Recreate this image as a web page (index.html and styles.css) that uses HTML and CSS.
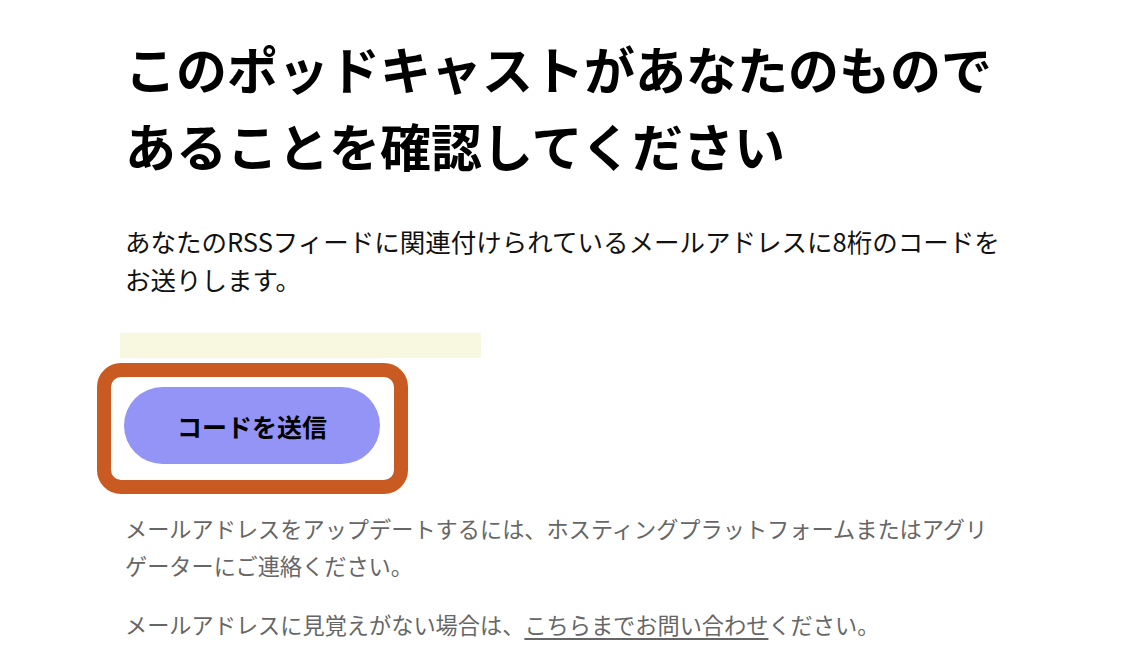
FILE: index.html
```html
<!doctype html>
<html lang="ja">
<head>
	<meta charset="UTF-8">
	<title>ポッドキャストの確認</title>
	<link rel="stylesheet" href="styles.css">
</head>
<body>

	<div class="page">

		<h1 class="title">このポッドキャストがあなたのもので<br>あることを確認してください</h1>

		<p class="lead">あなたのRSSフィードに関連付けられているメールアドレスに8桁のコードを<br>お送りします。</p>

		<div class="emailBar"></div>

		<div class="highlight">
			<button class="sendButton" type="button">コードを送信</button>
		</div>

		<p class="note">メールアドレスをアップデートするには、ホスティングプラットフォームまたはアグリ<br>ゲーターにご連絡ください。</p>

		<p class="note">メールアドレスに見覚えがない場合は、<a href="#">こちらまでお問い合わせ</a>ください。</p>

	</div>

</body>
</html>
```

FILE: styles.css
```css
html, body {
	margin: 0;
	padding: 0;
	background: #ffffff;
}

body {
	font-family: "Noto Sans CJK JP", "Noto Sans", sans-serif;
	color: #111111;
}

.page {
	padding: 30px 0 0 125px;
}

.title {
	margin: 0;
	font-size: 51px;
	line-height: 77px;
	font-weight: 700;
	color: #000000;
}

.lead {
	margin: 38px 0 0 0;
	font-size: 25.5px;
	line-height: 38px;
}

.emailBar {
	margin: 35px 0 0 -5px;
	width: 361px;
	height: 25px;
	background: #f8f8e0;
}

/* the orange frame round the button */
.highlight {
	display: inline-block;
	margin: 5px 0 0 -28px;
	padding: 10px 14px 16px 13px;
	border: 14px solid #c95a22;
	border-radius: 24px;
}

.sendButton {
	display: block;
	width: 256px;
	height: 77px;
	border: none;
	border-radius: 40px;
	background: #9494f7;
	font-family: inherit;
	font-size: 25px;
	font-weight: 700;
	color: #000000;
}

.note {
	margin: 16px 0 0 0;
	font-size: 22.2px;
	line-height: 37px;
	color: #666666;
}

.note + .note {
	margin-top: 22px;
}

.note a {
	color: #666666;
	text-decoration: underline;
	text-underline-offset: 4px;
}
```
